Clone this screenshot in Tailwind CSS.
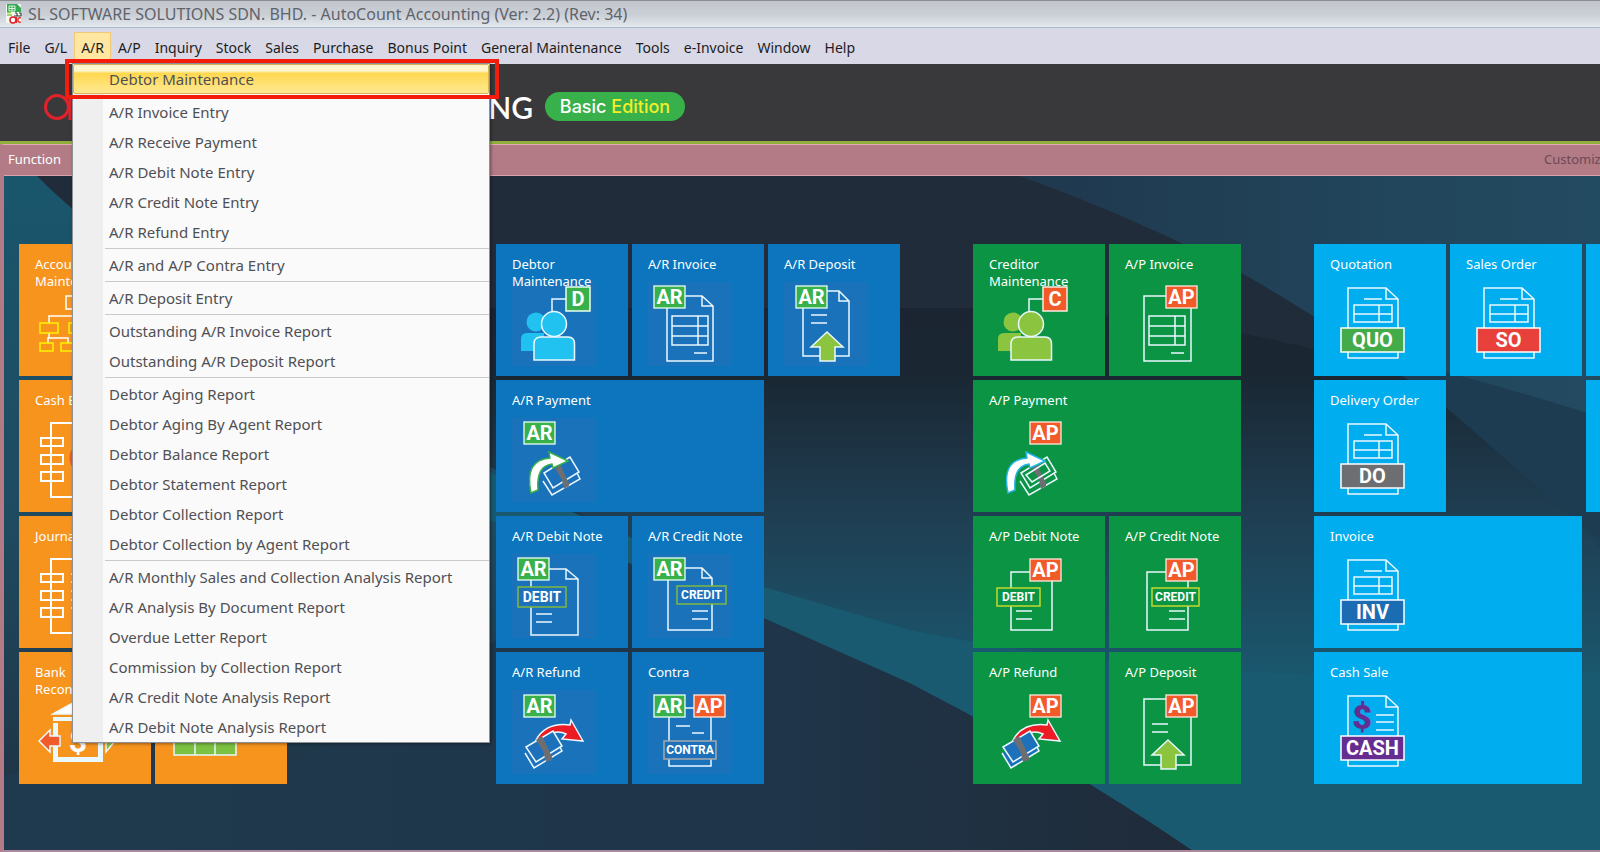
<!DOCTYPE html>
<html lang="en">
<head>
    <meta charset="UTF-8">
    <meta name="viewport" content="width=device-width, initial-scale=1.0">
    <title>AutoCount Accounting</title>
    <script src="https://cdn.jsdelivr.net/npm/@tailwindcss/browser@4"></script>
</head>
<body class="h-screen flex flex-col overflow-hidden bg-[#1f2c39] font-['Noto_Sans','Open_Sans',sans-serif]">
    <!-- Shared icon parts -->
    <svg width="0" height="0" class="absolute">
        <defs>
            <g id="ar"><rect x="1" y="1" width="31" height="22" fill="#39b14a" stroke="#e8fff0" stroke-width="1.3"/><text x="16.5" y="19" text-anchor="middle" font-family="Roboto, sans-serif" font-weight="700" font-size="20" fill="#fff" stroke="none">AR</text></g>
            <g id="ap"><rect x="1" y="1" width="31" height="22" fill="#f15a29" stroke="#ffe9df" stroke-width="1.3"/><text x="16.5" y="19" text-anchor="middle" font-family="Roboto, sans-serif" font-weight="700" font-size="20" fill="#fff" stroke="none">AP</text></g>
            <g id="lines"><path d="M0 0H16M0 8H16"/></g>
            <g id="grid"><path d="M24 34H60V63H24ZM24 44H60M24 54H60M50 34V63M46 71H59"/></g>
            <g id="up"><path d="M43 50L59 65H51V79H36V65H27Z" fill="#8bc53f"/></g>
            <g id="people"><circle cx="24" cy="40" r="9.5" stroke="none"/><path d="M9 69V57Q9 51 15 51H32V69Z" stroke="none"/><path d="M40 30V17H54" fill="none"/><circle cx="42" cy="42" r="12.5"/><path d="M22 78V62Q22 55 29 55H56Q62.500 55 62.500 62V78Z"/></g>
            <g id="money"><path d="M31 63L40 77L68 61L65 55"/><path d="M32 55L58 39L67 54L41 70Z"/><path d="M43 50L49 47L52 55L57 65V68L52 71L50 62Z" fill="#6d6e71" stroke="none"/></g>
            <g id="cells"><path d="M37 57L56 45L61 53L43 64Z" fill="none"/></g>
            <g id="pay"><path d="M19 75Q12 42 38 40L37 34L56 43L41 50L40 46Q24 48 26 72Z" fill="#fff"/></g>
            <g id="back"><path d="M24 50Q34 32 58 35L59 30L71 51L50 49L54 44Q42 38 30 50Z" fill="#ed1c24"/></g>
            <g id="money2"><path d="M13 63L22 78L50 61L47 55"/><path d="M14 57L41 41L50 56L24 72Z"/><path d="M24 50L30 46L35 56L40 67V70L34 72L31 61Z" fill="#6d6e71" stroke="none"/></g>
            <g id="doc"><path d="M18 6H56L68 17V76H18ZM56 6V17H68"/></g>
            <g id="docgrid"><path d="M34 17H52M24 23H62V40H24ZM24 32H62M49 23V40"/></g>
            <g id="book" fill="none" stroke="#fff" stroke-width="2"><path d="M60 5H16V79H60M6 20H28V28H6ZM6 37H28V46H6ZM6 54H28V63H6Z"/></g>
        </defs>
    </svg>

    <!-- Title bar -->
    <header class="relative z-10 flex h-7 shrink-0 items-center gap-1 border-t border-[#8b8c94] bg-linear-to-b from-[#c3c6cc] via-[#c9ced5] to-[#e3e9ef] px-1 border-b border-b-[#a9bac9]">
        <svg width="20" height="20" viewBox="0 0 18 20">
            <rect x="1" y="0" width="15" height="19" rx="1" fill="#f4f8f2"/>
            <path d="M2 0H12L16 4V8H2Z" fill="#35a853"/>
            <path d="M4 2H10V7H4ZM4 4.500H10M7 2V7" fill="none" stroke="#dff5e0"/>
            <path d="M2 11H7M2 8.500H6" stroke="#8bc53f" stroke-width="1.500"/>
            <path d="M10 9H12V12M14 9H16V12M9 12H16" fill="none" stroke="#333"/>
            <circle cx="8" cy="16" r="3" fill="#fff" stroke="#e02020" stroke-width="1.500"/>
            <path d="M11.500 13V19M16 14Q13 13 13 16Q13 19 16 18" fill="none" stroke="#e02020" stroke-width="1.300"/>
        </svg>
        <h1 class="whitespace-nowrap text-base text-[#5f636b]">SL SOFTWARE SOLUTIONS SDN. BHD. - AutoCount Accounting (Ver: 2.2) (Rev: 34)</h1>
    </header>

    <!-- Menu bar -->
    <nav class="flex h-9 shrink-0 items-end bg-[#d8d8e6] pl-px text-sm text-[#1c1c22]" id="menubar"></nav>

    <!-- Brand strip -->
    <div class="flex h-[80px] shrink-0 items-center gap-3 border-b-[3px] border-[#8fae3c] bg-[#39393b] pl-11 pt-2">
        <div class="flex w-[489px] items-center justify-between">
            <svg width="28" height="28" viewBox="0 0 28 28" fill="none" stroke="#e2222b" stroke-width="3"><circle cx="13" cy="14" r="11.500"/><path d="M26 3V27"/></svg>
            <span class="font-['Lato'] text-3xl font-semibold text-white">ACCOUNTING</span>
        </div>
        <span class="flex h-[29px] w-[140px] items-center justify-center rounded-full bg-[#39b14a] font-['Inter'] text-lg font-medium text-white"><span>Basic <span class="text-[#f3ee2c]">Edition</span></span></span>
    </div>

    <!-- Function panel -->
    <main class="flex min-h-0 flex-1 flex-col border-t border-[#e3a9b5] border-l-4 border-l-[#b37b86] border-b-2 border-b-[#a88a9c] bg-[#b37b86]">
        <div class="flex h-[31px] shrink-0 items-center justify-between whitespace-nowrap border-b border-[#d9a3ae] pl-1 text-[13px] text-white">
            <h2>Function</h2>
            <button class="-mr-2 text-[#6b4a54]">Customize</button>
        </div>
        <div class="relative min-h-0 flex-1 overflow-hidden">
            <svg class="absolute inset-0 h-full w-full" viewBox="4 176 1596 674" preserveAspectRatio="none">
                <defs>
                    <linearGradient id="mid" x1="0" y1="0" x2="0" y2="1"><stop offset="0" stop-color="#1a2531"/><stop offset=".12" stop-color="#1a2733"/><stop offset=".4" stop-color="#1f4055"/><stop offset=".7" stop-color="#195a71"/><stop offset="1" stop-color="#195a71"/></linearGradient>
                    <linearGradient id="low" x1="0" y1="0" x2="1" y2="0"><stop offset="0" stop-color="#1f3a4e"/><stop offset=".65" stop-color="#1f3549"/><stop offset="1" stop-color="#1f2b39"/></linearGradient>
                    <linearGradient id="left" x1="0" y1="0" x2="0" y2="1"><stop offset="0" stop-color="#19566c"/><stop offset=".5" stop-color="#1f4b61"/><stop offset="1" stop-color="#1f2f3e"/></linearGradient>
                    <linearGradient id="far" x1="0" y1="0" x2="1" y2="0"><stop offset="0" stop-color="#1f384e"/><stop offset=".7" stop-color="#22475d"/><stop offset="1" stop-color="#224a60"/></linearGradient>
                </defs>
                <path d="M4 176H1600V420H4Z" fill="#202c39"/>
                <path d="M4 308H980Q1240 315 1400 377L1600 430V860H4Z" fill="url(#mid)"/>
                <path d="M1400 370Q1500 450 1565 512L1600 548V400Z" fill="#1e4056"/>
                <path d="M1020 176Q1130 215 1240 272Q1350 335 1452 412L1565 512L1600 540V176Z" fill="#1d3c51"/>
                <path d="M1020 176Q1130 215 1240 272Q1310 312 1370 352Q1500 385 1600 417V176Z" fill="url(#far)"/>
                <path d="M4 176H37Q110 250 260 340L496 470V860H4Z" fill="url(#left)"/>
                <path d="M496 470Q640 540 764 618L910 683Q1060 760 1195 852H4V775Q100 755 300 760L496 640Z" fill="url(#low)"/>
                <path d="M486 470Q620 540 764 587L910 630Q1200 690 1600 672V852H1195Q1060 760 910 683L764 618Q600 545 486 520Z" fill="#195a71"/>
            </svg>

            <div class="relative flex gap-[73px] pl-[15px] pt-[68px]" id="groups"></div>
        </div>
    </main>

    <!-- A/R drop-down -->
    <div class="absolute left-[72px] top-[63px] w-[418px] border border-[#8f9096] bg-[#fafafa] bg-linear-to-r from-[#efefef] from-[30px] to-[#fafafa] to-[30px] text-[15px] text-[#505054] shadow-[1px_1px_3px_rgba(0,0,0,.4)]" id="dropdown"></div>
    <div class="pointer-events-none absolute left-[65px] top-[59px] h-10 w-[434px] border-4 border-[#f41c0a]"></div>

    <script>
        const menus = ['File', 'G/L', 'A/R', 'A/P', 'Inquiry', 'Stock', 'Sales', 'Purchase', 'Bonus Point', 'General Maintenance', 'Tools', 'e-Invoice', 'Window', 'Help'];

        // Each inner array is a section, sections are split by a rule
        const sections = [
            ['Debtor Maintenance'],
            ['A/R Invoice Entry', 'A/R Receive Payment', 'A/R Debit Note Entry', 'A/R Credit Note Entry', 'A/R Refund Entry'],
            ['A/R and A/P Contra Entry'],
            ['A/R Deposit Entry'],
            ['Outstanding A/R Invoice Report', 'Outstanding A/R Deposit Report'],
            ['Debtor Aging Report', 'Debtor Aging By Agent Report', 'Debtor Balance Report', 'Debtor Statement Report', 'Debtor Collection Report', 'Debtor Collection by Agent Report'],
            ['A/R Monthly Sales and Collection Analysis Report', 'A/R Analysis By Document Report', 'Overdue Letter Report', 'Commission by Collection Report', 'A/R Credit Note Analysis Report', 'A/R Debit Note Analysis Report']
        ];

        const use = (id, x = 0, y = 0) => `<use href="#${id}" x="${x}" y="${y}"/>`;
        const label = (x, y, w, h, fill, stroke, size, text) => `
            <rect x="${x}" y="${y}" width="${w}" height="${h}" fill="${fill}" stroke="${stroke}"/>
            <text x="${x + w / 2}" y="${y + h / 2 + size * 0.36}" text-anchor="middle" font-family="Roboto, sans-serif" font-weight="700" font-size="${size}" fill="#fff" stroke="none">${text}</text>`;
        const salesDoc = (color, text) => use('doc') + use('docgrid') + label(11, 46, 63, 24, color, '#fff', 20, text);

        const blue = '#1d71bb', green = '#0b9444';
        const icons = {
            account: '<path d="M31 14H53V27H31ZM42 27V34M14 41V34H70V41M42 34V41M14 51V56M13 61V56H33V61" stroke="#fff"/><path d="M5 41H23V51H5ZM34 41H52V51H34ZM5 61H18V69H5ZM26 61H39V69H26Z" stroke="#fff200"/>',
            cashbook: use('book') + '<circle cx="51" cy="40" r="15" stroke="#f15a29" stroke-width="3"/>',
            journal: use('book') + '<path d="M36 20H56M36 28H56M36 37H56M36 46H56M36 54H56"/>',
            bank: '<path d="M18 24L43 10L68 24Z" fill="#fff"/><path d="M18 29H68" stroke-width="4"/><path d="M20.500 33V69.500H65.500V33" stroke-width="5"/><text x="43" y="62" text-anchor="middle" font-family="Roboto, sans-serif" font-weight="700" font-size="32" fill="#fff" stroke="none">$</text><path d="M4 51L15 40V46H25V56H15V62Z" fill="#f15a29"/><path d="M80 51L71 40V62Z" fill="#8bc53f"/>',
            sheet: '<path d="M3 20H65V65H3ZM3 50H65M24 20V65M44 20V65" fill="#7cc242"/>',
            debtor: `<g fill="#21c2ef">${use('people')}</g>` + label(54, 5, 24, 24, '#39b14a', '#e8fff0', 20, 'D'),
            arInvoice: '<path d="M19 14H54L65 24V79H19ZM54 14V24H65"/>' + use('grid') + use('ar', 5, 3),
            arDeposit: '<path d="M19 9H55L65 19V74H19ZM55 9V19H65"/>' + use('lines', 27, 33) + use('up') + use('ar', 11, 3),
            arPayment: use('ar', 11, 3) + `<g fill="${blue}">${use('money')}</g><g stroke="#39b14a">${use('pay')}</g>`,
            arDebit: '<path d="M19 15H54L66 25V81H19ZM54 15V25H66"/>' + use('lines', 24, 60) + use('ar', 5, 3) + label(6, 33, 48, 20, blue, '#7fb93f', 14, 'DEBIT'),
            arCredit: '<path d="M20 14H54L64 24V76H20ZM54 14V24H64"/>' + use('lines', 44, 57) + use('ar', 5, 3) + label(29, 32, 49, 18, blue, '#7fb93f', 12, 'CREDIT'),
            arRefund: use('ar', 11, 4) + use('back') + `<g fill="${blue}">${use('money2')}</g>`,
            contra: '<path d="M21 18H63V76H21ZM28 36H42M44 43H56"/>' + use('ar', 5, 4) + use('ap', 45, 4) + label(16, 51, 52, 18, blue, '#a7a9ac', 12, 'CONTRA'),
            creditor: `<g fill="#8bc53f">${use('people')}</g>` + label(54, 5, 24, 24, '#f15a29', '#ffe9df', 20, 'C'),
            apInvoice: '<path d="M19 14H66V79H19Z"/>' + use('grid') + use('ap', 40, 3),
            apPayment: use('ap', 40, 3) + `<g fill="none">${use('money') + use('cells')}</g><g stroke="#27b5e8">${use('pay')}</g>`,
            apDebit: '<path d="M22 18H63V76H22Z"/>' + use('lines', 27, 57) + use('ap', 40, 4) + label(8, 34, 43, 18, green, '#c4d82e', 12, 'DEBIT'),
            apCredit: '<path d="M22 18H63V76H22Z"/>' + use('lines', 44, 57) + use('ap', 40, 4) + label(27, 34, 47, 18, green, '#c4d82e', 12, 'CREDIT'),
            apRefund: use('ap', 40, 4) + use('back') + `<g fill="${blue}">${use('money2')}</g>`,
            apDeposit: '<path d="M19 9H66V75H19Z"/>' + use('lines', 27, 34) + use('up') + use('ap', 40, 4),
            quo: salesDoc('#43ab49', 'QUO'),
            so: salesDoc('#e8403a', 'SO'),
            do: salesDoc('#6d6e71', 'DO'),
            inv: salesDoc('#1c6cb4', 'INV'),
            cash: use('doc') + '<path d="M46 25H64M46 32H64M46 40H64"/><text x="32" y="39" text-anchor="middle" font-family="Roboto, sans-serif" font-weight="900" font-size="34" fill="#662d91" stroke="none">$</text>' + label(11, 46, 63, 24, '#662d91', '#fff', 20, 'CASH'),
            none: ''
        };

        // Tile: title, icon, grid placement
        const groups = [
            { color: 'bg-[#f7941e]', cols: 'grid-cols-[repeat(3,132px)]', tiles: [
                ['Account Maintenance', 'account', 'col-start-1'],
                ['Cash Book', 'cashbook', 'col-start-1'],
                ['Journal', 'journal', 'col-start-1'],
                ['Bank Reconciliation', 'bank', 'col-start-1'],
                ['', 'sheet', 'col-start-2']
            ] },
            { color: 'bg-[#0d75bd]', tint: 'bg-[#1a72bb]', cols: 'grid-cols-[repeat(3,132px)]', tiles: [
                ['Debtor Maintenance', 'debtor', ''],
                ['A/R Invoice', 'arInvoice', ''],
                ['A/R Deposit', 'arDeposit', ''],
                ['A/R Payment', 'arPayment', 'col-span-2'],
                ['A/R Debit Note', 'arDebit', 'col-start-1'],
                ['A/R Credit Note', 'arCredit', ''],
                ['A/R Refund', 'arRefund', 'col-start-1'],
                ['Contra', 'contra', '']
            ] },
            { color: 'bg-[#0b9444]', cols: 'grid-cols-[repeat(2,132px)]', tiles: [
                ['Creditor Maintenance', 'creditor', ''],
                ['A/P Invoice', 'apInvoice', ''],
                ['A/P Payment', 'apPayment', 'col-span-2'],
                ['A/P Debit Note', 'apDebit', ''],
                ['A/P Credit Note', 'apCredit', ''],
                ['A/P Refund', 'apRefund', ''],
                ['A/P Deposit', 'apDeposit', '']
            ] },
            { color: 'bg-[#00adef]', cols: 'grid-cols-[repeat(3,132px)]', tiles: [
                ['Quotation', 'quo', ''],
                ['Sales Order', 'so', ''],
                ['', 'none', ''],
                ['Delivery Order', 'do', 'col-start-1'],
                ['', 'none', 'col-start-3'],
                ['Invoice', 'inv', 'col-span-2 col-start-1'],
                ['Cash Sale', 'cash', 'col-span-2 col-start-1']
            ] }
        ];

        document.getElementById('menubar').innerHTML = menus.map(name => `
            <button class="h-8 whitespace-nowrap border px-[6px] ${name === 'A/R' ? 'border-[#f0c878] bg-[#ffe7a2]' : 'border-transparent'}">${name}</button>`).join('');

        document.getElementById('dropdown').innerHTML = sections.map((items, i) => items.map(name => `
            <button class="block h-[30px] w-full whitespace-nowrap text-left ${i === 0 ? 'rounded-xs border border-[#d9b35a] bg-linear-to-b from-[#fff6d0] from-20% via-[#ffd84e] via-30% to-[#ffe98f] pl-[35px]' : 'pl-9'}">${name}</button>`).join('')
        ).join('<hr class="my-px ml-8 border-[#c9cacd]">');

        document.getElementById('groups').innerHTML = groups.map(group => `
            <section class="grid shrink-0 auto-rows-[132px] gap-1 ${group.cols}">
                ${group.tiles.map(([title, icon, place]) => `
                    <button class="flex flex-col items-start pl-4 pt-3 text-left text-[13px] leading-[17px] text-white ${group.color} ${place}">
                        <span class="relative h-[26px] w-[110px]">${title}</span>
                        <svg class="size-[84px] shrink-0 ${group.tint || ''}" viewBox="0 0 84 84" fill="none" stroke="#eaf8ff" stroke-width="1.500">${icons[icon]}</svg>
                    </button>`).join('')}
            </section>`).join('');
    </script>
</body>
</html>
